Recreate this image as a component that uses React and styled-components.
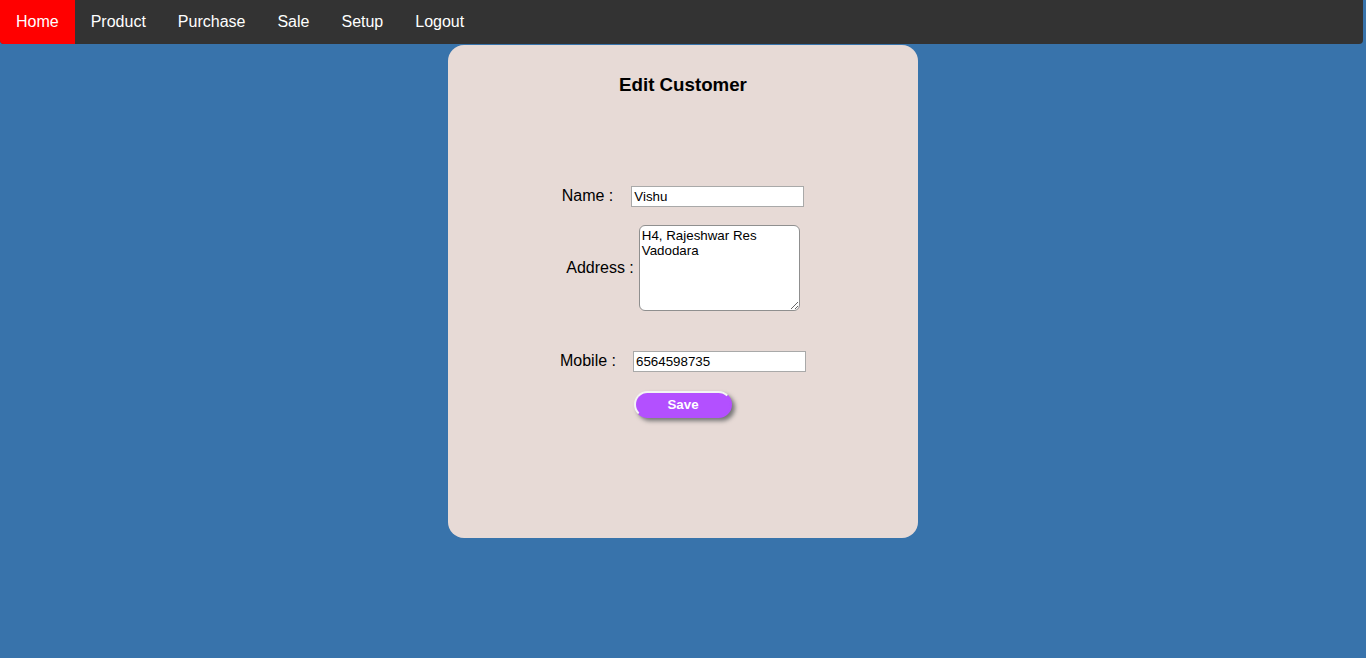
import React from 'react';
import styled, { createGlobalStyle } from 'styled-components';

const GlobalStyle = createGlobalStyle`
  body {
    margin: 0;
    background-color: #3873ab;
    font-family: "Liberation Sans", Arial, sans-serif;
  }
`;

const s = {
  Page: styled.div`
    min-height: 658px;
    background-color: #3873ab;
  `,
  TopNav: styled.nav`
    display: flex;
    height: 44px;
    margin-right: 3px;
    background-color: #333333;
    border-radius: 0 0 4px 4px;
    overflow: hidden;
  `,
  NavLink: styled.a`
    display: flex;
    align-items: center;
    padding: 0 16px;
    font-size: 16px;
    color: #ffffff;
    text-decoration: none;
    background-color: ${(props) => (props.$active ? '#ff0000' : 'transparent')};
    cursor: pointer;
  `,
  Card: styled.div`
    box-sizing: border-box;
    width: 470px;
    height: 493px;
    margin: 1px auto 0;
    padding-top: 29px;
    background-color: #e7dad6;
    border-radius: 16px;
    display: flex;
    flex-direction: column;
    align-items: center;
  `,
  Title: styled.h3`
    margin: 0;
    font-size: 18.72px;
    font-weight: bold;
    color: #000000;
  `,
  Form: styled.form`
    display: flex;
    flex-direction: column;
    align-items: center;
    width: 100%;
  `,
  Row: styled.div`
    display: flex;
    align-items: center;
    justify-content: center;
    gap: ${(props) => props.$gap}px;
    margin-top: ${(props) => props.$top}px;
  `,
  Label: styled.label`
    font-size: 16px;
    color: #000000;
    margin-top: -1px;
  `,
  TextInput: styled.input`
    box-sizing: border-box;
    width: 173px;
    height: 21px;
    padding: 1px 2px;
    border: 1px solid #a9a9a9;
    font-family: "Liberation Sans", Arial, sans-serif;
    font-size: 13.33px;
    color: #000000;
    background: #ffffff;
  `,
  TextArea: styled.textarea`
    box-sizing: border-box;
    width: 161px;
    height: 86px;
    padding: 2px;
    border: 1px solid #8f8f8f;
    border-radius: 6px;
    font-family: "Liberation Sans", Arial, sans-serif;
    font-size: 13.33px;
    line-height: 15px;
    color: #000000;
    background: #ffffff;
  `,
  SaveButton: styled.button`
    box-sizing: border-box;
    width: 98px;
    height: 27px;
    margin-top: 19px;
    border: 2px solid #f4f4f4;
    border-right-color: #b350ff;
    border-bottom-color: #b350ff;
    border-radius: 14px;
    background-color: #b350ff;
    color: #ffffff;
    font-family: "Liberation Sans", Arial, sans-serif;
    font-size: 13.33px;
    font-weight: bold;
    box-shadow: 3px 3px 4px #777777;
    cursor: pointer;
  `,
};

const links = ['Home', 'Product', 'Purchase', 'Sale', 'Setup', 'Logout'];

const App = () => {
  return (
    <s.Page>
      <GlobalStyle />
      <s.TopNav>
        {links.map((l) => (
          <s.NavLink key={l} $active={l === 'Home'}>
            {l}
          </s.NavLink>
        ))}
      </s.TopNav>
      <s.Card>
        <s.Title>Edit Customer</s.Title>
        <s.Form onSubmit={(e) => e.preventDefault()}>
          <s.Row $gap={18} $top={90}>
            <s.Label>Name :</s.Label>
            <s.TextInput type="text" defaultValue="Vishu" />
          </s.Row>
          <s.Row $gap={5} $top={18}>
            <s.Label>Address :</s.Label>
            <s.TextArea defaultValue={'H4, Rajeshwar Res\nVadodara'} />
          </s.Row>
          <s.Row $gap={17} $top={40}>
            <s.Label>Mobile :</s.Label>
            <s.TextInput type="text" defaultValue="6564598735" />
          </s.Row>
          <s.SaveButton type="submit">Save</s.SaveButton>
        </s.Form>
      </s.Card>
    </s.Page>
  );
};

export default App;
